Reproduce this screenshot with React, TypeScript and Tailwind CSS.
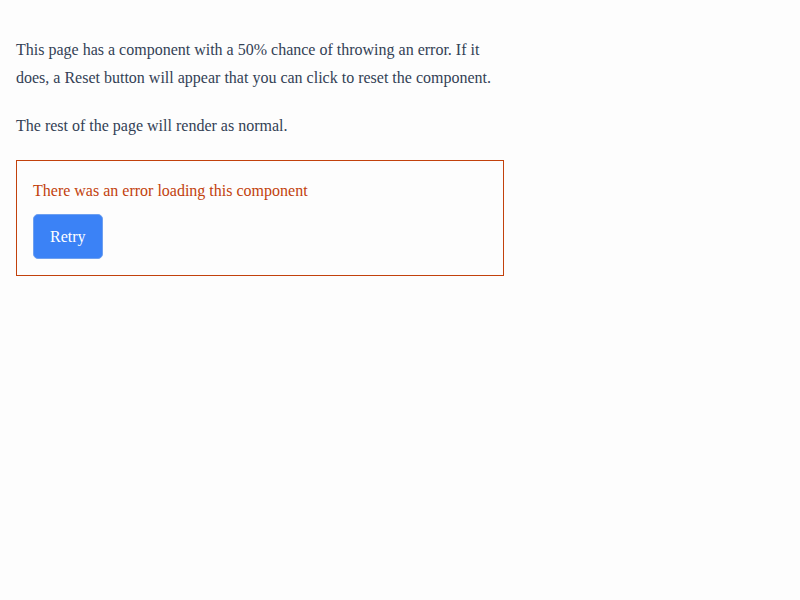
export default function App() {
  return (
    <div className="min-h-screen bg-[#fdfdfd] px-4 pt-9 font-['Liberation_Serif',serif] text-[16px] leading-[28px] text-[#334155]">
      <div className="w-[488px] space-y-5">
        <p>
          This page has a component with a 50% chance of throwing an error. If it does, a Reset button will
          appear that you can click to reset the component.
        </p>
        <p>The rest of the page will render as normal.</p>

        <section className="border border-[#c2410c] p-4">
          <p className="text-[#c2410c]">There was an error loading this component</p>
          <button className="mt-[9px] h-[45px] rounded-[5px] border border-[#6ea0f0] bg-[#3b82f6] px-4 text-white">
            Retry
          </button>
        </section>
      </div>
    </div>
  );
}
